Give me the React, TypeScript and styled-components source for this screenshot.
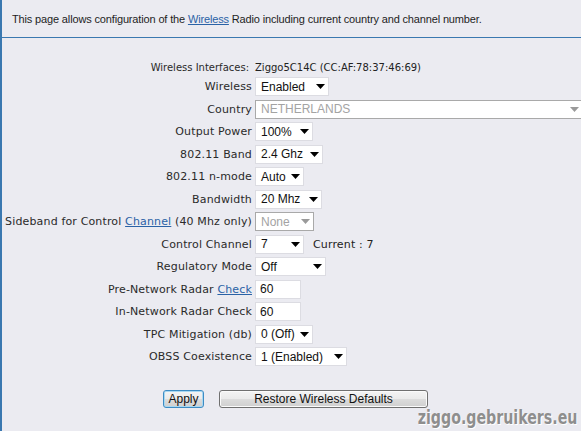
import React from "react";
import styled, { createGlobalStyle } from "styled-components";

const GlobalStyle = createGlobalStyle`
  html, body {
    margin: 0;
    padding: 0;
    width: 581px;
    height: 431px;
    overflow: hidden;
    background: #ebebf1;
  }
`;

const Page = styled.div`
  position: relative;
  box-sizing: border-box;
  height: 431px;
  border-left: 2px solid #3a78b0;
  font-family: "DejaVu Sans", Verdana, sans-serif;
  font-size: 11px;
  letter-spacing: 0.15px;
  color: #222;
`;

const Intro = styled.div`
  height: 37px;
  display: flex;
  align-items: center;
  padding-left: 10px;
  border-bottom: 1px solid #3a78b0;
  font-family: "Liberation Sans", Arial, sans-serif;
  font-size: 11px;
  letter-spacing: -0.15px;
  color: #1e1e1e;
`;

const Link = styled.a`
  color: #2a62a6;
  text-decoration: underline;
  cursor: pointer;
`;

const Form = styled.div`
  display: grid;
  grid-template-columns: 250px 1fr;
  grid-template-rows: 16.5px;
  grid-auto-rows: 22.5px;
  column-gap: 3px;
  padding-top: 21px;
  align-items: center;
`;

const Label = styled.div<{ $small?: boolean }>`
  text-align: right;
  white-space: nowrap;
  color: #2a2a2a;
  font-size: ${(p) => (p.$small ? "10px" : "11px")};
  letter-spacing: ${(p) => (p.$small ? "0" : "0.15px")};
  padding-right: ${(p) => (p.$small ? "3px" : "0")};
`;

const Cell = styled.div`
  display: flex;
  align-items: center;
  gap: 9px;
  white-space: nowrap;
  min-width: 0;
`;

const Value = styled.span<{ $small?: boolean }>`
  color: #222;
  font-size: ${(p) => (p.$small ? "10px" : "11px")};
  letter-spacing: ${(p) => (p.$small ? "0" : "0.15px")};
`;

const SelectBox = styled.div<{ $w: number; $disabled?: boolean }>`
  box-sizing: border-box;
  flex: none;
  width: ${(p) => p.$w}px;
  height: 19px;
  display: flex;
  align-items: center;
  justify-content: space-between;
  padding: 0 3px 0 5px;
  background: #fff;
  border: 1px solid ${(p) => (p.$disabled ? "#a9a9a9" : "#dcdce2")};
  font-family: "Liberation Sans", Arial, sans-serif;
  font-size: 12px;
  letter-spacing: 0;
  color: ${(p) => (p.$disabled ? "#a3a3a3" : "#111")};
`;

const TextInput = styled.div`
  box-sizing: border-box;
  width: 46px;
  height: 19px;
  display: flex;
  align-items: center;
  padding-left: 4px;
  background: #fff;
  border: 1px solid #dcdce2;
  font-family: "Liberation Sans", Arial, sans-serif;
  font-size: 12px;
  letter-spacing: 0;
  color: #111;
`;

const ButtonRow = styled.div`
  display: flex;
  gap: 15px;
  padding-left: 161px;
  margin-top: 21.5px;
`;

const Button = styled.button<{ $w: number; $focused?: boolean }>`
  box-sizing: border-box;
  width: ${(p) => p.$w}px;
  height: 18px;
  padding: 0;
  border-radius: 3px;
  border: 1px solid ${(p) => (p.$focused ? "#3d8cc4" : "#707070")};
  box-shadow: inset 0 0 0 1px ${(p) => (p.$focused ? "#a8d8f2" : "#fbfbfb")};
  background: linear-gradient(#f4f4f4 0%, #ebebeb 48%, #dcdcdc 52%, #cfcfcf 100%);
  font-family: "Liberation Sans", Arial, sans-serif;
  font-size: 12px;
  letter-spacing: 0;
  color: #111;
  line-height: 14px;
`;

const Watermark = styled.div`
  position: absolute;
  right: 4px;
  bottom: 3px;
  font-family: "DejaVu Sans Condensed", "DejaVu Sans", sans-serif;
  font-weight: bold;
  font-size: 19px;
  letter-spacing: 0;
  color: #8e8e8e;
  text-shadow: 0 0 1px #fff, 1px 1px 0 #fff;
  transform: scaleX(0.83);
  transform-origin: right bottom;
`;

const Arrow: React.FC<{ disabled?: boolean }> = ({ disabled }) => (
  <svg width="9" height="5" viewBox="0 0 9 5">
    <path d="M0 0 H9 L4.5 5 Z" fill={disabled ? "#9a9a9a" : "#000"} />
  </svg>
);

const Select: React.FC<{ w: number; value: string; disabled?: boolean }> = ({
  w,
  value,
  disabled,
}) => (
  <SelectBox $w={w} $disabled={disabled}>
    <span>{value}</span>
    <Arrow disabled={disabled} />
  </SelectBox>
);

export default function App() {
  return (
    <>
      <GlobalStyle />
      <Page>
        <Intro>
          <span>
            This page allows configuration of the <Link>Wireless</Link> Radio including
            current country and channel number.
          </span>
        </Intro>
        <Form>
          <Label $small>Wireless Interfaces:</Label>
          <Cell>
            <Value $small>Ziggo5C14C (CC:AF:78:37:46:69)</Value>
          </Cell>

          <Label>Wireless</Label>
          <Cell>
            <Select w={74} value="Enabled" />
          </Cell>

          <Label>Country</Label>
          <Cell>
            <Select w={328} value="NETHERLANDS" disabled />
          </Cell>

          <Label>Output Power</Label>
          <Cell>
            <Select w={58} value="100%" />
          </Cell>

          <Label>802.11 Band</Label>
          <Cell>
            <Select w={68} value="2.4 Ghz" />
          </Cell>

          <Label>802.11 n-mode</Label>
          <Cell>
            <Select w={49} value="Auto" />
          </Cell>

          <Label>Bandwidth</Label>
          <Cell>
            <Select w={67} value="20 Mhz" />
          </Cell>

          <Label>
            Sideband for Control <Link>Channel</Link> (40 Mhz only)
          </Label>
          <Cell>
            <Select w={59} value="None" disabled />
          </Cell>

          <Label>Control Channel</Label>
          <Cell>
            <Select w={49} value="7" />
            <Value>Current : 7</Value>
          </Cell>

          <Label>Regulatory Mode</Label>
          <Cell>
            <Select w={71} value="Off" />
          </Cell>

          <Label>
            Pre-Network Radar <Link>Check</Link>
          </Label>
          <Cell>
            <TextInput>60</TextInput>
          </Cell>

          <Label>In-Network Radar Check</Label>
          <Cell>
            <TextInput>60</TextInput>
          </Cell>

          <Label>TPC Mitigation (db)</Label>
          <Cell>
            <Select w={58} value="0 (Off)" />
          </Cell>

          <Label>OBSS Coexistence</Label>
          <Cell>
            <Select w={92} value="1 (Enabled)" />
          </Cell>
        </Form>
        <ButtonRow>
          <Button $w={41} $focused>
            Apply
          </Button>
          <Button $w={209}>Restore Wireless Defaults</Button>
        </ButtonRow>
        <Watermark>ziggo.gebruikers.eu</Watermark>
      </Page>
    </>
  );
}
